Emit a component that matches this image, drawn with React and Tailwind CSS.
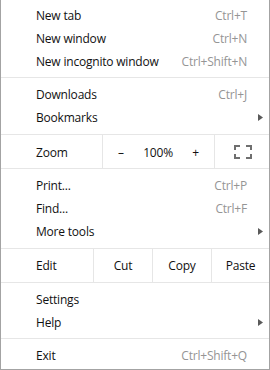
import React from 'react'

const font = { fontFamily: "'Open Sans', 'Noto Sans', sans-serif" }

const Arrow = () => (
  <svg width="5" height="7" viewBox="0 0 5 7" className="block">
    <path d="M0 0 L5 3.5 L0 7 Z" fill="#5a5a5a" />
  </svg>
)

const Item = ({ label, keys, sub }) => (
  <div className={`flex items-center h-[23px] pl-[35px] ${sub ? 'pr-[6px]' : 'pr-[22px]'}`}>
    <span className="text-[#111]">{label}</span>
    <span className="flex-1" />
    {keys && <span className="text-[#959595]">{keys}</span>}
    {sub && <Arrow />}
  </div>
)

const Sep = () => <div className="h-px bg-[#e6e6e6]" />

const FullScreen = () => (
  <svg width="18" height="14" viewBox="0 0 18 14" className="block">
    <g fill="none" stroke="#6f6f6f" strokeWidth="2">
      <path d="M1 5 V1 H6" />
      <path d="M12 1 H17 V5" />
      <path d="M1 9 V13 H6" />
      <path d="M12 13 H17 V9" />
    </g>
  </svg>
)

export default function App() {
  return (
    <div
      className="w-[270px] h-[370px] bg-white border-l border-r border-b border-[#a3a3a3] text-[12px] leading-none tracking-[-0.2px] flex flex-col"
      style={font}
    >
      <div className="pt-[4px] pb-[4px]">
        <Item label="New tab" keys="Ctrl+T" />
        <Item label="New window" keys="Ctrl+N" />
        <Item label="New incognito window" keys="Ctrl+Shift+N" />
      </div>
      <Sep />
      <div className="pt-[5px] pb-[5px]">
        <Item label="Downloads" keys="Ctrl+J" />
        <Item label="Bookmarks" sub />
      </div>
      <Sep />
      <div className="flex h-[33px] text-[#111]">
        <div className="w-[102px] border-r border-[#e6e6e6] flex items-center pl-[35px] pt-[2px]">Zoom</div>
        <div className="w-[112px] border-r border-[#e6e6e6] flex items-center justify-between px-[15px] pt-[2px]">
          <span>–</span>
          <span>100%</span>
          <span>+</span>
        </div>
        <div className="flex-1 flex items-center justify-center pl-[2px]">
          <FullScreen />
        </div>
      </div>
      <Sep />
      <div className="pt-[5px] pb-[5px]">
        <Item label="Print..." keys="Ctrl+P" />
        <Item label="Find..." keys="Ctrl+F" />
        <Item label="More tools" sub />
      </div>
      <Sep />
      <div className="flex h-[33px] text-[#111]">
        <div className="w-[93px] border-r border-[#e6e6e6] flex items-center pl-[35px]">Edit</div>
        <div className="w-[59px] border-r border-[#e6e6e6] flex items-center justify-center">Cut</div>
        <div className="w-[59px] border-r border-[#e6e6e6] flex items-center justify-center">Copy</div>
        <div className="flex-1 flex items-center justify-center">Paste</div>
      </div>
      <Sep />
      <div className="pt-[5px] pb-[4px]">
        <Item label="Settings" />
        <Item label="Help" sub />
      </div>
      <Sep />
      <div className="pt-[5px]">
        <Item label="Exit" keys="Ctrl+Shift+Q" />
      </div>
    </div>
  )
}
